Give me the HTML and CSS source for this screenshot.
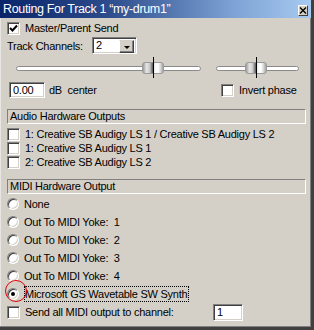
FILE: index.html
```html
<!DOCTYPE html>
<html lang="en">
<head>
	<meta charset="UTF-8">
	<title>Routing</title>
<link rel="stylesheet" href="styles.css">
</head>
<body>
	<div id="window">
		<div class="titlebar">
			<span class="title">Routing For Track 1 “my-drum1”</span>
			<span class="close">
				<svg width="8" height="7" viewBox="0 0 8 7"><path d="M1 0.5 L7 6.5 M7 0.5 L1 6.5" stroke="#000" stroke-width="1.4"/></svg>
			</span>
		</div>
		<div class="content">
			<div class="row r-master">
				<span class="check">
					<svg width="9" height="9" viewBox="0 0 9 9"><path d="M1 4 L3.5 6.5 L8 1.5" fill="none" stroke="#000" stroke-width="2"/></svg>
				</span>
				<span class="label">Master/Parent Send</span>
			</div>
			<div class="row r-channels">
				<span class="text">Track Channels:</span>
				<div class="combo">
					<span class="combo-val">2</span>
					<span class="combo-btn"><span class="tri"></span></span>
				</div>
			</div>
			<div class="row r-sliders">
				<div class="slider s-vol">
					<div class="groove"></div>
					<div class="thumb" style="left: 126px;"><i></i></div>
				</div>
				<div class="slider s-pan">
					<div class="groove"></div>
					<div class="thumb" style="left: 29px;"><i></i></div>
				</div>
			</div>
			<div class="row r-db">
				<div class="db-left">
					<span class="edit e-db">0.00</span>
					<span class="text">dB&nbsp; center</span>
				</div>
				<span class="check"></span>
				<span class="label">Invert phase</span>
			</div>

			<div class="header h-audio">Audio Hardware Outputs</div>
			<div class="row r-item">
				<span class="check"></span>
				<span class="label">1: Creative SB Audigy LS 1 / Creative SB Audigy LS 2</span>
			</div>
			<div class="row r-item">
				<span class="check"></span>
				<span class="label">1: Creative SB Audigy LS 1</span>
			</div>
			<div class="row r-item">
				<span class="check"></span>
				<span class="label">2: Creative SB Audigy LS 2</span>
			</div>

			<div class="header h-midi">MIDI Hardware Output</div>
			<div class="row r-radio">
				<span class="radio"></span>
				<span class="label">None</span>
			</div>
			<div class="row r-radio">
				<span class="radio"></span>
				<span class="label">Out To MIDI Yoke:&nbsp; 1</span>
			</div>
			<div class="row r-radio">
				<span class="radio"></span>
				<span class="label">Out To MIDI Yoke:&nbsp; 2</span>
			</div>
			<div class="row r-radio">
				<span class="radio"></span>
				<span class="label">Out To MIDI Yoke:&nbsp; 3</span>
			</div>
			<div class="row r-radio">
				<span class="radio"></span>
				<span class="label">Out To MIDI Yoke:&nbsp; 4</span>
			</div>
			<div class="row r-radio r-selected">
				<span class="radio on"><i></i></span>
				<span class="label focus">Microsoft GS Wavetable SW Synth</span>
				<span class="mark"></span>
			</div>
			<div class="row r-send">
				<span class="check"></span>
				<span class="label">Send all MIDI output to channel:</span>
				<span class="edit e-chan">1</span>
			</div>
		</div>
	</div>
</body>
</html>
```
FILE: styles.css
```css
* {
	margin: 0;
	padding: 0;
	box-sizing: border-box;
}
body {
	background: #d4d0c8;
	font-family: "Liberation Sans", Arial, sans-serif;
	font-size: 11px;
	letter-spacing: -0.25px;
	color: #000;
}
#window {
	width: 314px;
	height: 330px;
	position: relative;
	background: #d4d0c8;
	border-right: 3px solid #404040;
	border-bottom: 3px solid #404040;
	box-shadow: inset -1px -1px 0 #808080, inset 1px 0 0 #e8e6e2;
	overflow: hidden;
}
.titlebar {
	height: 18px;
	display: flex;
	align-items: center;
	justify-content: space-between;
	padding: 0 3px 0 3px;
	background: linear-gradient(to right, #0a246a 0%, #2c4c8c 35%, #7ea2d4 75%, #a6caf0 100%);
	color: #fff;
}
.title {
	font-size: 12.5px;
	letter-spacing: -0.35px;
	white-space: nowrap;
}
.close {
	width: 10px;
	height: 11px;
	margin-top: 2px;
	display: flex;
	align-items: center;
	justify-content: center;
	background: #d4d0c8;
	border: 1px solid;
	border-color: #fff #404040 #404040 #fff;
}
.content {
	padding: 3px 5px 0 7px;
	display: flex;
	flex-direction: column;
}
.row {
	display: flex;
	align-items: center;
	white-space: nowrap;
}
.check {
	width: 13px;
	height: 13px;
	flex-shrink: 0;
	background: #fff;
	border: 1px solid;
	border-color: #808080 #fff #fff #808080;
	box-shadow: inset 1px 1px 0 #404040, inset -1px -1px 0 #d4d0c8;
	display: flex;
	align-items: center;
	justify-content: center;
}
.label {
	margin-left: 5px;
}
.r-master {
	height: 14px;
}
.r-channels {
	height: 17px;
	margin-top: 2px;
}
.r-channels .text {
	width: 85px;
}
.combo {
	width: 45px;
	height: 17px;
	display: flex;
	background: #fff;
	border: 1px solid;
	border-color: #808080 #fff #fff #808080;
	box-shadow: inset 1px 1px 0 #404040, inset -1px -1px 0 #d4d0c8;
	padding: 2px;
}
.combo-val {
	flex: 1;
	line-height: 11px;
	padding-left: 1px;
}
.combo-btn {
	width: 15px;
	height: 13px;
	background: #d4d0c8;
	border: 1px solid;
	border-color: #d4d0c8 #404040 #404040 #fff;
	box-shadow: inset -1px -1px 0 #808080;
	display: flex;
	align-items: center;
	justify-content: center;
}
.tri {
	width: 0;
	height: 0;
	border-left: 3px solid transparent;
	border-right: 3px solid transparent;
	border-top: 3px solid #000;
	margin-top: 1px;
}
.r-sliders {
	height: 20px;
	margin-top: 4px;
	padding-left: 9px;
}
.slider {
	position: relative;
	height: 20px;
}
.s-vol {
	width: 185px;
}
.s-pan {
	width: 83px;
	margin-left: 15px;
}
.groove {
	position: absolute;
	left: 0;
	right: 0;
	top: 8px;
	height: 5px;
	background: #fff;
	border: 1px solid #8a8a8a;
	border-radius: 3px;
}
.thumb {
	position: absolute;
	top: 4px;
	width: 22px;
	height: 12px;
	border-radius: 3px;
	border: 1px solid #9a9a9a;
	background: linear-gradient(to right, #9c9c9c 0%, #e6e6e6 18%, #c8c8c8 34%, #6e6e6e 46%, #5a5a5a 50%, #f4f4f4 58%, #ffffff 75%, #cfcfcf 90%, #a0a0a0 100%);
}
.thumb i {
	position: absolute;
	left: 10px;
	top: -6px;
	width: 1px;
	height: 21px;
	background: #000;
}
.r-db {
	height: 16px;
	margin-top: 4px;
}
.db-left {
	width: 214px;
	display: flex;
	align-items: center;
	flex-shrink: 0;
}
.edit {
	height: 16px;
	background: #fff;
	border: 1px solid;
	border-color: #808080 #fff #fff #808080;
	box-shadow: inset 1px 1px 0 #404040, inset -1px -1px 0 #d4d0c8;
	padding: 1px 0 0 3px;
	line-height: 13px;
}
.e-db {
	width: 36px;
	margin-left: 2px;
	margin-right: 4px;
}
.header {
	height: 15px;
	padding-left: 2px;
	line-height: 13px;
	border: 1px solid;
	border-color: #808080 #fff #fff #808080;
}
.h-audio {
	margin-top: 11px;
}
.h-midi {
	margin-top: 10px;
}
.r-item {
	height: 14px;
}
.h-audio + .r-item {
	margin-top: 3px;
}
.r-radio {
	height: 18px;
	position: relative;
}
.h-midi + .r-radio {
	margin-top: 1px;
}
.radio {
	width: 12px;
	height: 12px;
	flex-shrink: 0;
	border-radius: 50%;
	background: #fff;
	border: 1px solid;
	border-color: #808080 #fff #fff #808080;
	box-shadow: inset 1px 1px 0 #404040, inset -1px -1px 0 #d4d0c8;
	display: flex;
	align-items: center;
	justify-content: center;
}
.radio i {
	width: 4px;
	height: 4px;
	border-radius: 50%;
	background: #000;
}
.focus {
	border: 1px dotted #000;
	padding: 1px 1px 1px 0;
	margin-left: 5px;
	line-height: 12px;
}
.mark {
	position: absolute;
	left: -2px;
	top: -5px;
	width: 22px;
	height: 22px;
	border: 1px solid #e00000;
	border-radius: 50%;
}
.r-send {
	height: 18px;
}
.e-chan {
	width: 30px;
	height: 17px;
	margin-left: auto;
	margin-right: 63px;
}
```
